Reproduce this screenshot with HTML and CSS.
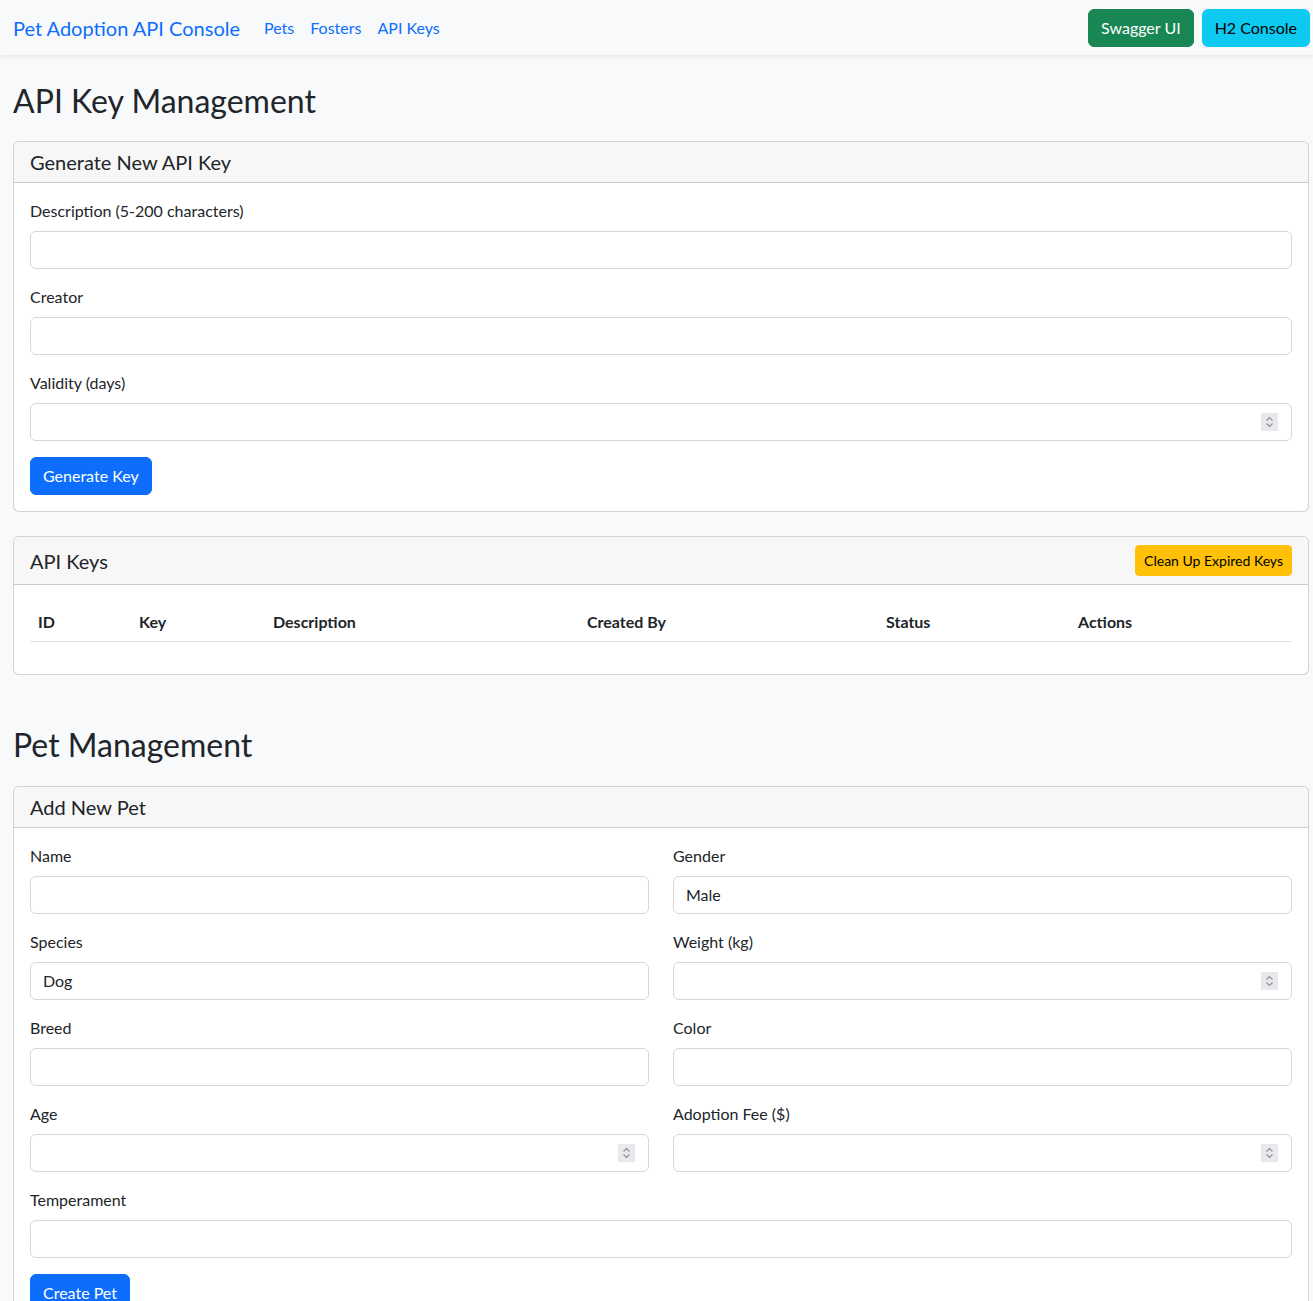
FILE: index.html
```html
<!DOCTYPE html>
<html lang="en">
<head>
<meta charset="utf-8">
<title>Pet Adoption API Console</title>
<link rel="stylesheet" href="styles.css">
</head>
<body>
<nav class="navbar">
  <a class="brand" href="#">Pet Adoption API Console</a>
  <ul class="nav-links">
    <li><a href="#">Pets</a></li>
    <li><a href="#">Fosters</a></li>
    <li><a href="#">API Keys</a></li>
  </ul>
  <div class="nav-actions">
    <a class="btn btn-success" href="#">Swagger UI</a>
    <a class="btn btn-info" href="#">H2 Console</a>
  </div>
</nav>

<main class="page">
  <section class="page-section">
    <h2 class="page-title">API Key Management</h2>
    <div class="card">
      <div class="card-header"><h5 class="card-title">Generate New API Key</h5></div>
      <div class="card-body">
        <div class="field">
          <label class="field-label">Description (5-200 characters)</label>
          <input class="form-control" type="text">
        </div>
        <div class="field">
          <label class="field-label">Creator</label>
          <input class="form-control" type="text">
        </div>
        <div class="field">
          <label class="field-label">Validity (days)</label>
          <div class="number-wrap">
            <input class="form-control" type="text">
            <span class="spinner"><svg viewBox="0 0 17 18" width="17" height="18"><path d="M5.5 7.5 L8.5 4.5 L11.5 7.5 M5.5 10.5 L8.5 13.5 L11.5 10.5" fill="none" stroke="#8a8a90" stroke-width="1.1"/></svg></span>
          </div>
        </div>
        <button class="btn btn-primary" type="button">Generate Key</button>
      </div>
    </div>

    <div class="card">
      <div class="card-header header-flex">
        <h5 class="card-title">API Keys</h5>
        <button class="btn btn-warning btn-sm" type="button">Clean Up Expired Keys</button>
      </div>
      <div class="card-body">
        <table class="table">
          <thead>
            <tr>
              <th class="col-id">ID</th>
              <th class="col-key">Key</th>
              <th class="col-desc">Description</th>
              <th class="col-by">Created By</th>
              <th class="col-status">Status</th>
              <th class="col-actions">Actions</th>
            </tr>
          </thead>
          <tbody></tbody>
        </table>
      </div>
    </div>
  </section>

  <section class="page-section">
    <h2 class="page-title">Pet Management</h2>
    <div class="card">
      <div class="card-header"><h5 class="card-title">Add New Pet</h5></div>
      <div class="card-body">
        <div class="form-grid">
          <div class="field">
            <label class="field-label">Name</label>
            <input class="form-control" type="text">
          </div>
          <div class="field">
            <label class="field-label">Gender</label>
            <input class="form-control" type="text" value="Male">
          </div>
          <div class="field">
            <label class="field-label">Species</label>
            <input class="form-control" type="text" value="Dog">
          </div>
          <div class="field">
            <label class="field-label">Weight (kg)</label>
            <div class="number-wrap">
              <input class="form-control" type="text">
              <span class="spinner"><svg viewBox="0 0 17 18" width="17" height="18"><path d="M5.5 7.5 L8.5 4.5 L11.5 7.5 M5.5 10.5 L8.5 13.5 L11.5 10.5" fill="none" stroke="#8a8a90" stroke-width="1.1"/></svg></span>
            </div>
          </div>
          <div class="field">
            <label class="field-label">Breed</label>
            <input class="form-control" type="text">
          </div>
          <div class="field">
            <label class="field-label">Color</label>
            <input class="form-control" type="text">
          </div>
          <div class="field">
            <label class="field-label">Age</label>
            <div class="number-wrap">
              <input class="form-control" type="text">
              <span class="spinner"><svg viewBox="0 0 17 18" width="17" height="18"><path d="M5.5 7.5 L8.5 4.5 L11.5 7.5 M5.5 10.5 L8.5 13.5 L11.5 10.5" fill="none" stroke="#8a8a90" stroke-width="1.1"/></svg></span>
            </div>
          </div>
          <div class="field">
            <label class="field-label">Adoption Fee ($)</label>
            <div class="number-wrap">
              <input class="form-control" type="text">
              <span class="spinner"><svg viewBox="0 0 17 18" width="17" height="18"><path d="M5.5 7.5 L8.5 4.5 L11.5 7.5 M5.5 10.5 L8.5 13.5 L11.5 10.5" fill="none" stroke="#8a8a90" stroke-width="1.1"/></svg></span>
            </div>
          </div>
          <div class="field span-2">
            <label class="field-label">Temperament</label>
            <input class="form-control" type="text">
          </div>
        </div>
        <button class="btn btn-primary" type="button">Create Pet</button>
      </div>
    </div>
  </section>
</main>
</body>
</html>
```

FILE: styles.css
```css
html { scrollbar-width: none; }
html::-webkit-scrollbar { display: none; }
* { box-sizing: border-box; }
body {
  margin: 0;
  background: #f8f9fa;
  color: #212529;
  font-family: "Segoe UI", Lato, "Liberation Sans", sans-serif;
  font-size: 16px;
  line-height: 1.5;
}
a { text-decoration: none; }

.navbar {
  display: flex;
  align-items: center;
  height: 55px;
  padding: 0 3px 0 13px;
  background: #f8f9fa;
  box-shadow: 0 2px 4px rgba(0,0,0,0.075);
}
.brand {
  color: #0d6efd;
  font-size: 20px;
  line-height: 30px;
  margin-right: 16px;
}
.nav-links {
  display: flex;
  list-style: none;
  margin: 0;
  padding: 0;
}
.nav-links a {
  display: block;
  padding: 8px;
  color: #0d6efd;
  font-size: 16px;
}
.nav-actions {
  margin-left: auto;
  display: flex;
  gap: 8px;
}

.btn {
  display: inline-block;
  font-family: inherit;
  font-size: 16px;
  line-height: 24px;
  padding: 6px 12px;
  border: 1px solid transparent;
  border-radius: 6px;
  cursor: pointer;
}
.btn-success { background: #198754; border-color: #198754; color: #fff; }
.btn-info { background: #0dcaf0; border-color: #0dcaf0; color: #000; }
.btn-primary { background: #0d6efd; border-color: #0d6efd; color: #fff; }
.btn-warning { background: #ffc107; border-color: #ffc107; color: #000; }
.btn-sm { font-size: 14px; line-height: 21px; padding: 4px 8px; border-radius: 4px; }

.page {
  padding: 27px 4px 40px 13px;
}
.page-section + .page-section { margin-top: 51px; }
.page-title {
  margin: 0 0 21px;
  font-size: 32px;
  font-weight: 400;
  line-height: 1.2;
}

.card {
  background: #fff;
  border: 1px solid rgba(0,0,0,0.175);
  border-radius: 6px;
  overflow: hidden;
}
.card + .card { margin-top: 24px; }
.card-header {
  background: #f7f7f7;
  border-bottom: 1px solid rgba(0,0,0,0.175);
  padding: 8px 16px;
}
.header-flex {
  display: flex;
  align-items: center;
  justify-content: space-between;
}
.card-title {
  margin: 0;
  padding-top: 1px;
  font-size: 20px;
  font-weight: 400;
  line-height: 23px;
}
.card-body { padding: 16px; }

.field { margin-bottom: 16px; }
.field-label {
  display: block;
  margin-bottom: 8px;
}
.form-control {
  display: block;
  width: 100%;
  height: 38px;
  padding: 6px 12px;
  font-family: inherit;
  font-size: 16px;
  line-height: 24px;
  color: #212529;
  background: #fff;
  border: 1px solid #d3d6da;
  border-radius: 6px;
  outline: none;
}
.number-wrap { position: relative; }
.spinner {
  position: absolute;
  right: 14px;
  top: 10px;
  width: 17px;
  height: 18px;
  background: #e9e9ed;
  display: flex;
}

.form-grid {
  display: grid;
  grid-template-columns: 1fr 1fr;
  column-gap: 24px;
}
.span-2 { grid-column: span 2; }

.table {
  width: 100%;
  border-collapse: collapse;
  margin-bottom: 16px;
}
.table th {
  text-align: left;
  font-weight: 700;
  padding: 9px 8px 7px;
  border-bottom: 1px solid #dee2e6;
}
.col-id { width: 101px; }
.col-key { width: 134px; }
.col-desc { width: 314px; }
.col-by { width: 299px; }
.col-status { width: 192px; }
```
